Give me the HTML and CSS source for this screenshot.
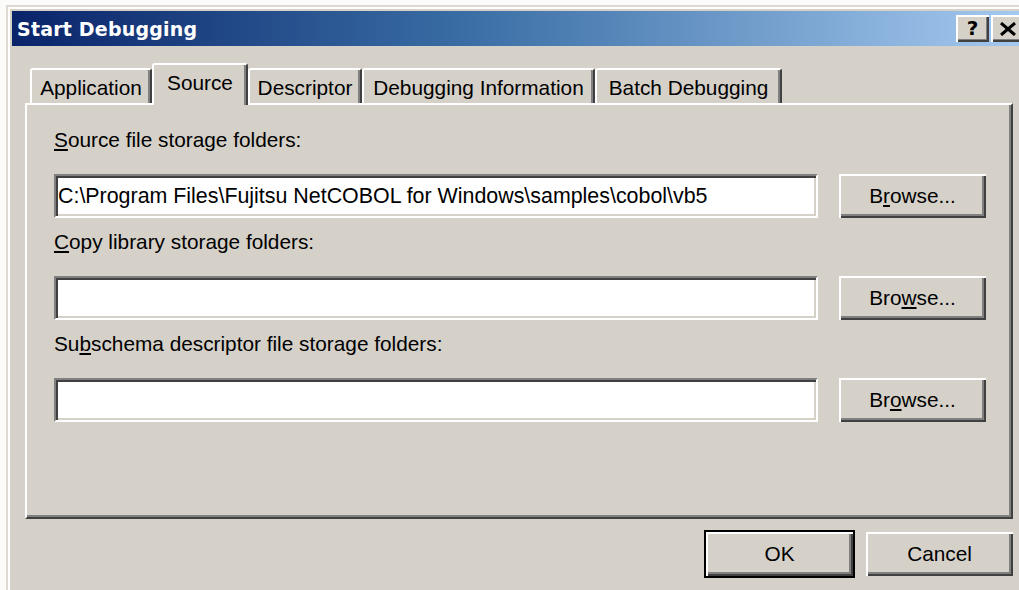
FILE: index.html
```html
<!DOCTYPE html>
<html lang="en">
<head>
<meta charset="utf-8">
<title>Start Debugging</title>
<link rel="stylesheet" href="styles.css">
</head>
<body>
<div class="window">
  <div class="titlebar">
    <span class="title">Start Debugging</span>
    <div class="caption-buttons">
      <button class="cap-btn" type="button">?</button>
      <button class="cap-btn cap-close" type="button">
        <svg width="16" height="14" viewBox="0 0 16 14" aria-hidden="true">
          <path d="M1 1 L15 13 M15 1 L1 13" stroke="#000" stroke-width="3"/>
        </svg>
      </button>
    </div>
  </div>
  <div class="client">
    <div class="tabs">
      <div class="tab tab-app">Application</div>
      <div class="tab tab-source active">Source</div>
      <div class="tab tab-desc">Descriptor</div>
      <div class="tab tab-info">Debugging Information</div>
      <div class="tab tab-batch">Batch Debugging</div>
    </div>
    <div class="panel">
      <div class="field">
        <div class="label"><u>S</u>ource file storage folders:</div>
        <div class="row">
          <div class="input">C:\Program Files\Fujitsu NetCOBOL for Windows\samples\cobol\vb5</div>
          <button class="btn" type="button">B<u>r</u>owse...</button>
        </div>
      </div>
      <div class="field">
        <div class="label"><u>C</u>opy library storage folders:</div>
        <div class="row">
          <div class="input"></div>
          <button class="btn" type="button">Bro<u>w</u>se...</button>
        </div>
      </div>
      <div class="field">
        <div class="label">Su<u>b</u>schema descriptor file storage folders:</div>
        <div class="row">
          <div class="input"></div>
          <button class="btn" type="button">Br<u>o</u>wse...</button>
        </div>
      </div>
    </div>
    <div class="actions">
      <button class="btn btn-default" type="button">OK</button>
      <button class="btn" type="button">Cancel</button>
    </div>
  </div>
</div>
</body>
</html>
```
FILE: styles.css
```css
html, body {
  margin: 0;
  padding: 0;
  background: #fbfbfa;
  overflow: hidden;
}

body {
  width: 1019px;
  height: 590px;
  font-family: "Liberation Sans", Arial, sans-serif;
  font-size: 20.8px;
  color: #000;
}

.window {
  margin: 5px 0 0 6px;
  width: 1020px;
  height: 600px;
  background: #d5d1c9;
  border-top: 2px solid #dedad3;
  border-left: 2px solid #dedad3;
  box-shadow: inset 2px 2px 0 #ffffff;
  padding: 4px 0 0 4px;
  box-sizing: border-box;
}

.titlebar {
  height: 35px;
  background: linear-gradient(to right, #0a246a 0%, #3a6ea5 45%, #a6caf0 100%);
  display: flex;
  align-items: center;
  justify-content: space-between;
  padding: 0 0 0 5px;
}

.title {
  font-family: "DejaVu Sans", Verdana, sans-serif;
  font-weight: bold;
  font-size: 19px;
  color: #fff;
  letter-spacing: 0.2px;
}

.caption-buttons {
  display: flex;
  gap: 2px;
  padding-right: 2px;
}

.cap-btn {
  width: 33px;
  height: 27px;
  padding: 0;
  margin: 0;
  border: none;
  background: #d5d1c9;
  box-shadow: inset 2px 2px 0 #ffffff, inset -2px -2px 0 #404040, inset -3px -3px 0 #808080;
  font-family: "DejaVu Sans", Verdana, sans-serif;
  font-weight: bold;
  font-size: 20px;
  line-height: 27px;
  color: #000;
  display: flex;
  align-items: center;
  justify-content: center;
}

.client {
  padding: 17px 0 0 13px;
  width: 988px;
}

.tabs {
  display: flex;
  align-items: flex-end;
  height: 40px;
  padding-left: 5px;
  position: relative;
  z-index: 1;
}

.tab {
  height: 35px;
  box-sizing: border-box;
  border-top: 2px solid #ffffff;
  border-left: 2px solid #ffffff;
  border-right: 2px solid #404040;
  box-shadow: inset -2px 0 0 #808080;
  border-radius: 3px 3px 0 0;
  display: flex;
  align-items: center;
  justify-content: center;
  padding-top: 2px;
  white-space: nowrap;
}

.tab.active {
  height: 42px;
  margin-bottom: -2px;
  background: #d5d1c9;
  padding-bottom: 6px;
}

.tab-app { width: 122px; }
.tab-source { width: 96px; }
.tab-desc { width: 114px; }
.tab-info { width: 233px; }
.tab-batch { width: 187px; }

.panel {
  height: 416px;
  box-sizing: border-box;
  border-top: 2px solid #ffffff;
  border-left: 2px solid #ffffff;
  border-right: 2px solid #404040;
  border-bottom: 2px solid #404040;
  box-shadow: inset -2px -2px 0 #808080;
  padding: 11px 25px 0 27px;
}

.field {
  display: flex;
  flex-direction: column;
}

.label {
  height: 58px;
  box-sizing: border-box;
  padding-top: 13px;
  line-height: 22px;
}

.row {
  display: flex;
  gap: 21px;
  height: 44px;
}

.input {
  flex: 1;
  background: #fff;
  box-sizing: border-box;
  border-top: 2px solid #808080;
  border-left: 2px solid #808080;
  border-right: 2px solid #ffffff;
  border-bottom: 2px solid #ffffff;
  box-shadow: inset 2px 2px 0 #404040, inset -2px -2px 0 #d5d1c9;
  padding: 0 2px;
  font-size: 21.4px;
  display: flex;
  align-items: center;
  white-space: nowrap;
  overflow: hidden;
}

.btn {
  width: 147px;
  height: 44px;
  margin: 0;
  padding: 0;
  font-family: inherit;
  font-size: 20.8px;
  color: #000;
  background: #d5d1c9;
  border: none;
  box-shadow: inset 2px 2px 0 #ffffff, inset -2px -2px 0 #404040, inset -4px -4px 0 #808080;
}

.actions {
  display: flex;
  justify-content: flex-end;
  gap: 13px;
  margin-top: 13px;
}

.btn-default {
  box-shadow: 0 0 0 2px #000, inset 2px 2px 0 #ffffff, inset -2px -2px 0 #404040, inset -4px -4px 0 #808080;
}
```
